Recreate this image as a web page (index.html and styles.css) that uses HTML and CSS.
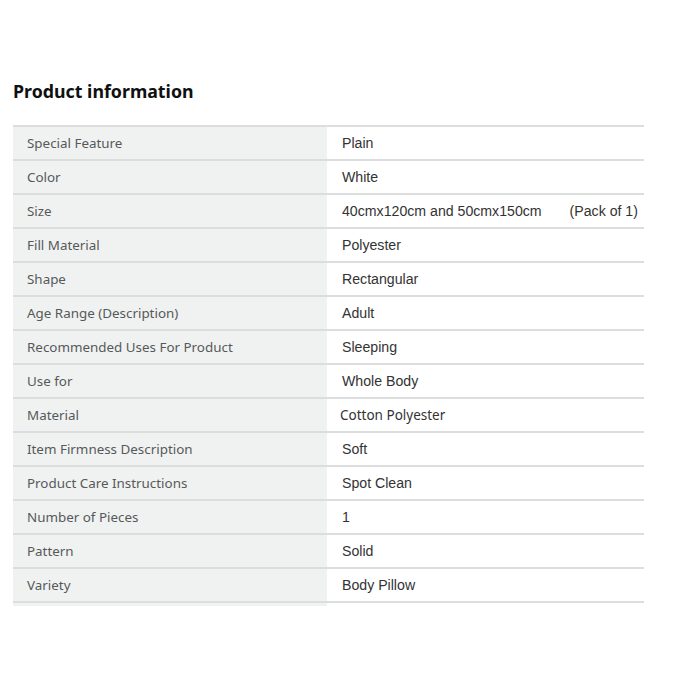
FILE: index.html
```html
<!DOCTYPE html>
<html>
<head>
<meta charset="utf-8">
<link rel="stylesheet" href="styles.css">
</head>
<body>
<div class="page">
  <h2 class="title">Product information</h2>
  <div class="table">
    <div class="row"><div class="key">Special Feature</div><div class="val">Plain</div></div>
    <div class="row"><div class="key">Color</div><div class="val">White</div></div>
    <div class="row"><div class="key">Size</div><div class="val">40cmx120cm and 50cmx150cm <span class="pack">(Pack of 1)</span></div></div>
    <div class="row"><div class="key">Fill Material</div><div class="val">Polyester</div></div>
    <div class="row"><div class="key">Shape</div><div class="val">Rectangular</div></div>
    <div class="row"><div class="key">Age Range (Description)</div><div class="val">Adult</div></div>
    <div class="row"><div class="key">Recommended Uses For Product</div><div class="val">Sleeping</div></div>
    <div class="row"><div class="key">Use for</div><div class="val">Whole Body</div></div>
    <div class="row"><div class="key">Material</div><div class="val alt">Cotton Polyester</div></div>
    <div class="row"><div class="key">Item Firmness Description</div><div class="val">Soft</div></div>
    <div class="row"><div class="key">Product Care Instructions</div><div class="val">Spot Clean</div></div>
    <div class="row"><div class="key">Number of Pieces</div><div class="val">1</div></div>
    <div class="row"><div class="key">Pattern</div><div class="val">Solid</div></div>
    <div class="row"><div class="key">Variety</div><div class="val">Body Pillow</div></div>
    <div class="row end"><div class="key"></div><div class="val"></div></div>
  </div>
</div>
</body>
</html>
```
FILE: styles.css
```css
html, body { margin: 0; padding: 0; background: #fff; }
.page { padding: 80px 31px 0 13px; }
.title {
  margin: 0 0 23px 0;
  font-family: "Noto Sans", "Open Sans", sans-serif;
  font-weight: 700;
  font-size: 17.8px;
  line-height: 22px;
  color: #0f1111;
}
.table { display: flex; flex-direction: column; }
.row {
  display: grid;
  grid-template-columns: 314px 1fr;
  height: 34px;
  box-sizing: border-box;
  border-top: 2px solid #dcdede;
}
.row.end { height: 5px; }
.key {
  background: #f0f2f2;
  padding: 0 14px;
  display: flex;
  align-items: center;
  font-family: "Noto Sans", "Open Sans", sans-serif;
  font-size: 13.4px;
  color: #565959;
}
.val {
  padding: 0 15px;
  display: flex;
  align-items: center;
  font-family: "Liberation Sans", Arial, sans-serif;
  font-size: 14.15px;
  color: #333;
  white-space: pre;
}
.val.alt {
  padding-left: 13px;
  font-family: "Noto Sans", "Open Sans", sans-serif;
  font-size: 13.5px;
  color: #333;
}
.pack { margin-left: 24px; }
.row.end .val { background: #fff; }
```
